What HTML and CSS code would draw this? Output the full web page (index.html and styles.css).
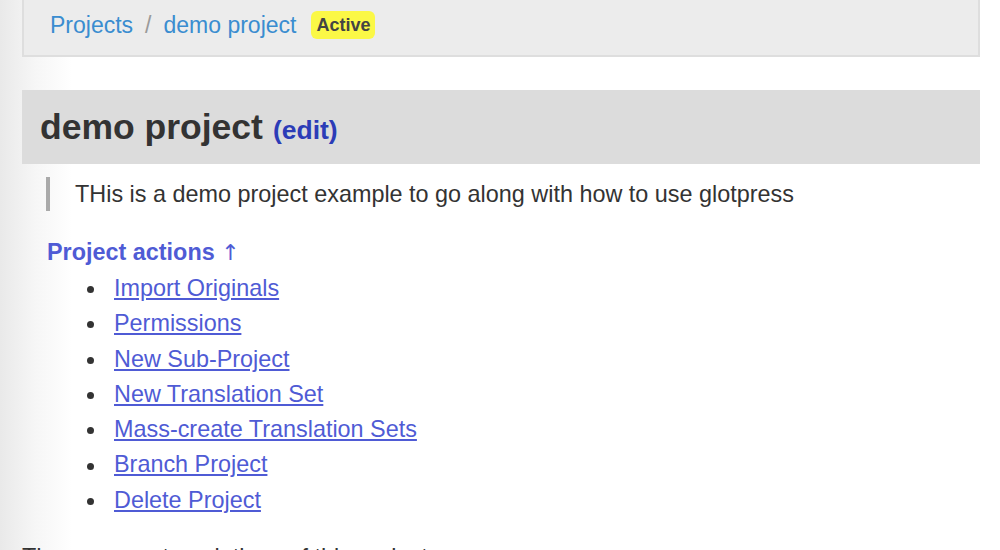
FILE: index.html
```html
<!DOCTYPE html>
<html lang="en">
<head>
<meta charset="utf-8">
<title>demo project</title>
<link rel="stylesheet" href="styles.css">
</head>
<body>
<div class="page">
  <nav class="breadcrumb">
    <a href="#" class="crumb">Projects</a>
    <span class="sep">/</span>
    <a href="#" class="crumb">demo project</a>
    <span class="badge">Active</span>
  </nav>

  <h2 class="title">
    <span class="title-text">demo project</span>
    <a href="#" class="edit">(edit)</a>
  </h2>

  <blockquote class="desc">THis is a demo project example to go along with how to use glotpress</blockquote>

  <h4 class="actions-head"><a href="#">Project actions <span class="arrow">&uarr;</span></a></h4>
  <ul class="actions">
    <li><a href="#">Import Originals</a></li>
    <li><a href="#">Permissions</a></li>
    <li><a href="#">New Sub-Project</a></li>
    <li><a href="#">New Translation Set</a></li>
    <li><a href="#">Mass-create Translation Sets</a></li>
    <li><a href="#">Branch Project</a></li>
    <li><a href="#">Delete Project</a></li>
  </ul>

  <p class="note">There are no translations of this project.</p>
</div>
</body>
</html>
```

FILE: styles.css
```css
html, body {
  margin: 0;
  padding: 0;
}

body {
  font-family: "Liberation Sans", Arial, Helvetica, sans-serif;
  color: #333;
  background: linear-gradient(to right, #e9e9e9 0, #f6f6f6 35px, #ffffff 72px) no-repeat;
  background-color: #fff;
  min-height: 550px;
}

.page {
  padding: 0 20px 0 22px;
}

.breadcrumb {
  display: flex;
  align-items: center;
  padding-left: 26px;
  background: #ececec;
  border: 2px solid #dedede;
  border-top: none;
  box-sizing: border-box;
  height: 57px;
  padding-bottom: 5px;
}

.crumb {
  font-size: 23px;
  color: #3a8dd0;
  text-decoration: none;
}

.sep {
  font-size: 23px;
  color: #9a9a9a;
  margin: 0 12px;
}

.badge {
  margin-left: 15px;
  background: #fbf846;
  color: #444;
  font-weight: bold;
  font-size: 18px;
  line-height: 28px;
  padding: 0 5px;
  border-radius: 6px;
}

.title {
  margin: 33px 0 0;
  height: 74px;
  display: flex;
  align-items: baseline;
  padding: 17px 18px 0;
  box-sizing: border-box;
  background: #dcdcdc;
  font-weight: bold;
}

.title-text {
  font-size: 35.5px;
  color: #333;
  line-height: 40px;
}

.edit {
  font-size: 26.5px;
  color: #2c3cb7;
  text-decoration: none;
  margin-left: 10px;
}

.desc {
  margin: 13px 0 0 24px;
  border-left: 4px solid #aaa;
  padding-left: 25px;
  font-size: 23.4px;
  line-height: 34px;
  color: #333;
}

.actions-head {
  margin: 26px 0 0 25px;
  font-size: 23.4px;
  line-height: 30px;
}

.actions-head a {
  color: #4f5bd5;
  text-decoration: none;
}

.arrow {
  font-family: "DejaVu Sans", sans-serif;
  font-weight: normal;
  font-size: 22px;
  color: #4f5bd5;
}

.actions {
  margin: 3px 0 0;
  padding: 0 0 0 65px;
  list-style: none;
  font-size: 23.4px;
  line-height: 35.3px;
}

.actions li {
  display: flex;
  align-items: center;
}

.actions li::before {
  content: "";
  width: 7px;
  height: 7px;
  border-radius: 50%;
  background: #333;
  margin: 2px 20px 0 0;
  flex: none;
}

.actions a {
  color: #4f5bd5;
  text-decoration: underline;
  text-underline-offset: 2px;
}

.note {
  margin: 24px 0 0;
  font-size: 23.4px;
  line-height: 30px;
  color: #333;
}
```
